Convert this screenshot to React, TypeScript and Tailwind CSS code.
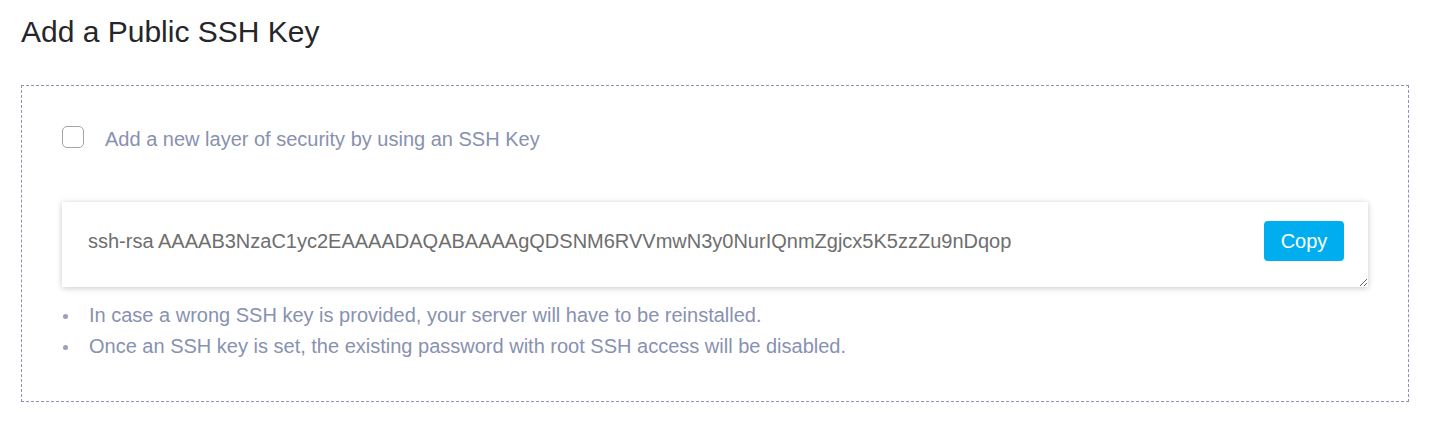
import { useState } from 'react';

const sshKey =
  'ssh-rsa AAAAB3NzaC1yc2EAAAADAQABAAAAgQDSNM6RVVmwN3y0NurIQnmZgjcx5K5zzZu9nDqop';

const notes = [
  'In case a wrong SSH key is provided, your server will have to be reinstalled.',
  'Once an SSH key is set, the existing password with root SSH access will be disabled.',
];

export default function App() {
  const [enabled, setEnabled] = useState(false);
  const [key, setKey] = useState(sshKey);

  return (
    <div className="min-h-screen bg-white px-[21px] pt-[14px] font-['Liberation_Sans',Arial,sans-serif]">
      <h1 className="text-[30px] leading-[36px] text-[#252629]">Add a Public SSH Key</h1>

      <div className="mt-[35px] w-[1388px] border border-dashed border-[#8a93b3] px-[40px] pt-[40px] pb-[39px]">
        <label className="flex items-start">
          <input
            type="checkbox"
            checked={enabled}
            onChange={(e) => setEnabled(e.target.checked)}
            className="h-[22px] w-[22px] appearance-none rounded-[5px] border border-[#a4a4a4] bg-white checked:bg-[#00aeef]"
          />
          <span className="ml-[21px] pt-[2px] text-[20px] leading-[22px] text-[#8891b0]">
            Add a new layer of security by using an SSH Key
          </span>
        </label>

        <div className="relative mt-[52px]">
          <textarea
            value={key}
            onChange={(e) => setKey(e.target.value)}
            className="block h-[85px] w-full resize border-0 bg-white pl-[26px] pr-[120px] pt-[27px] text-[20px] leading-[24px] text-[#6e6e6e] shadow-[0_1px_6px_rgba(0,0,0,0.22)] outline-none"
          />
          <button
            type="button"
            onClick={() => navigator.clipboard?.writeText(key)}
            className="absolute right-[24px] top-[19px] h-[40px] w-[80px] rounded-[4px] bg-[#00aeef] text-[20px] text-white"
          >
            Copy
          </button>
        </div>

        <ul className="mt-[13px] text-[20px] leading-[31px] text-[#8891b0]">
          {notes.map((note) => (
            <li key={note} className="flex items-center">
              <span className="ml-[1px] mr-[21px] mt-[2px] h-[5px] w-[5px] shrink-0 rounded-full bg-[#9aa1bb]" />
              <span>{note}</span>
            </li>
          ))}
        </ul>
      </div>
    </div>
  );
}
